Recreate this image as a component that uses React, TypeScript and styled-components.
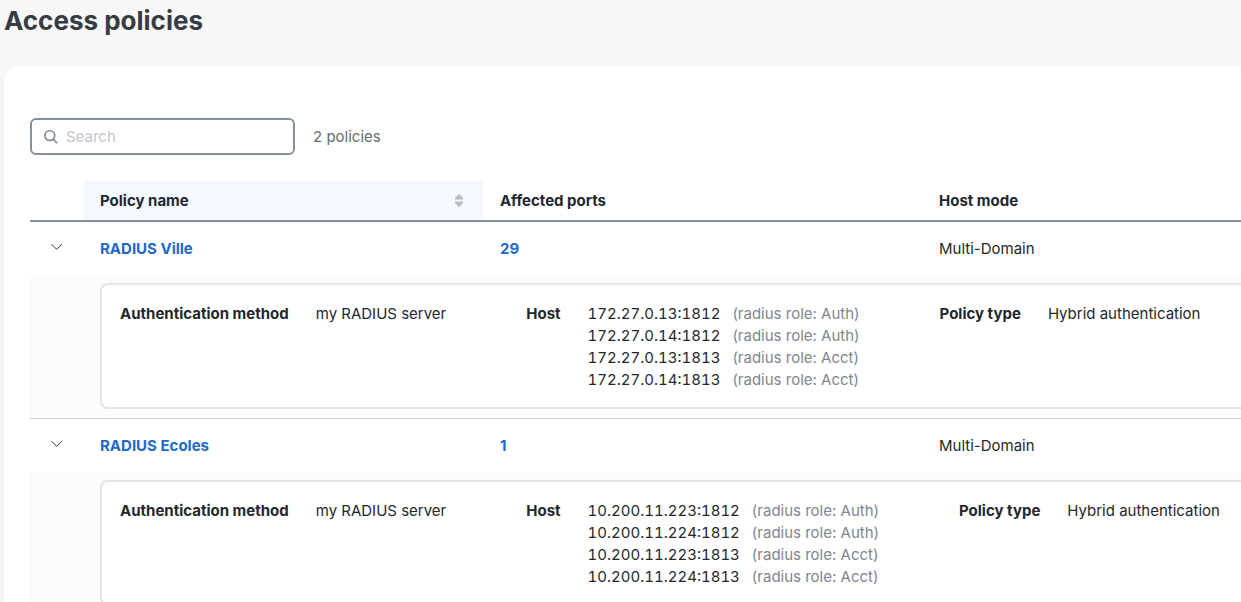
import React, { useState } from "react";
import styled, { createGlobalStyle } from "styled-components";

const GlobalStyle = createGlobalStyle`
  *, *::before, *::after { box-sizing: border-box; }
  body {
    margin: 0;
    background: #f7f7f7;
    color: #23282e;
    font-family: Inter, "Liberation Sans", sans-serif;
    font-size: 15px;
    line-height: 22px;
    overflow-x: hidden;
  }
  body::-webkit-scrollbar { display: none; }
`;

const Page = styled.main`
  padding: 4px 0 0 4px;
`;

const Title = styled.h1`
  margin: 0;
  color: #373c43;
  font-size: 26px;
  font-weight: 700;
  line-height: 34px;
`;

const Card = styled.section`
  margin-top: 28px;
  padding: 52px 0 24px 26px;
  background: #fff;
  border-top-left-radius: 16px;
  box-shadow: 0 6px 10px rgba(0, 0, 0, 0.06);
`;

const Toolbar = styled.div`
  display: flex;
  align-items: center;
  gap: 18px;
  margin-bottom: 26px;
`;

const SearchBox = styled.label`
  display: flex;
  align-items: center;
  gap: 8px;
  width: 265px;
  height: 37px;
  padding: 0 11px;
  border: 2px solid #889099;
  border-radius: 6px;
  color: #7e868f;
`;

const SearchInput = styled.input`
  flex: 1;
  min-width: 0;
  padding: 0;
  border: 0;
  outline: 0;
  background: transparent;
  color: #23282e;
  font: inherit;
  &::placeholder { color: #c1c6cb; opacity: 1; }
`;

const Count = styled.span`
  color: #656b73;
`;

const Table = styled.table`
  width: 100%;
  border-collapse: separate;
  border-spacing: 0;
  table-layout: fixed;
`;

const Column = styled.col<{ $width?: number }>`
  width: ${({ $width }) => ($width ? `${$width}px` : "auto")};
`;

const HeadCell = styled.th<{ $sorted?: boolean }>`
  height: 41px;
  padding: 0 17px;
  border-bottom: 2px solid #889099;
  background: ${({ $sorted }) => ($sorted ? "#f5f8ff" : "transparent")};
  font-weight: 700;
  text-align: left;
`;

const SortButton = styled.button`
  display: flex;
  align-items: center;
  justify-content: space-between;
  width: 100%;
  padding: 0 2px 0 0;
  border: 0;
  background: transparent;
  color: inherit;
  font: inherit;
  cursor: pointer;
`;

const Cell = styled.td`
  height: 53px;
  padding: 0 17px;
`;

const ToggleCell = styled(Cell)`
  padding: 0 0 6px;
  text-align: center;
`;

const Toggle = styled.button<{ $open: boolean }>`
  display: inline-flex;
  padding: 4px;
  border: 0;
  background: transparent;
  color: #30353b;
  cursor: pointer;
  svg { transform: ${({ $open }) => ($open ? "none" : "rotate(-90deg)")}; }
`;

const Link = styled.a`
  color: #1d69cc;
  font-weight: 700;
  text-decoration: none;
`;

const DetailCell = styled.td`
  padding: 8px 0 9px 70px;
  border-bottom: 1px solid #cdd1d6;
  background: #fbfbfb;
`;

const DetailPanel = styled.dl`
  display: flex;
  gap: 80px;
  margin: 0;
  padding: 18px 0 16px 18px;
  border: 2px solid #e1e4e8;
  border-right: 0;
  border-radius: 8px 0 0 8px;
  background: #fff;
  white-space: nowrap;
`;

const Field = styled.div`
  display: flex;
  gap: 27px;
`;

const Term = styled.dt`
  font-weight: 700;
`;

const Value = styled.dd`
  margin: 0;
`;

const HostLine = styled.div`
  display: flex;
  gap: 12px;
`;

const Address = styled.span`
  font-variant-numeric: tabular-nums;
`;

const Role = styled.span`
  color: #7e868f;
`;

const SearchIcon = () => (
  <svg width="15" height="15" viewBox="0 0 15 15" fill="none" stroke="currentColor" strokeWidth="1.6" strokeLinecap="round" aria-hidden="true">
    <circle cx="6.8" cy="6.6" r="4.9" />
    <path d="M10.5 10.5 13.6 13.6" />
  </svg>
);

const SortIcon = () => (
  <svg width="10" height="14" viewBox="0 0 10 14" fill="#babdc0" aria-hidden="true">
    <path d="M5 0 9 4V5.4H1V4Z" />
    <path d="M5 13 9 9V7.6H1V9Z" />
  </svg>
);

const ChevronIcon = () => (
  <svg width="12" height="8" viewBox="0 0 12 8" fill="none" stroke="currentColor" strokeWidth="1" aria-hidden="true">
    <path d="M.5 1.2 5.7 6.4l5.2-5.2" />
  </svg>
);

type Host = { address: string; role: string };
type Policy = { name: string; ports: number; mode: string; hosts: Host[] };

const makeHosts = (first: string, second: string): Host[] => [
  { address: `${first}:1812`, role: "Auth" },
  { address: `${second}:1812`, role: "Auth" },
  { address: `${first}:1813`, role: "Acct" },
  { address: `${second}:1813`, role: "Acct" },
];

const policies: Policy[] = [
  { name: "RADIUS Ville", ports: 29, mode: "Multi-Domain", hosts: makeHosts("172.27.0.13", "172.27.0.14") },
  { name: "RADIUS Ecoles", ports: 1, mode: "Multi-Domain", hosts: makeHosts("10.200.11.223", "10.200.11.224") },
];

const PolicyRows = ({ policy }: { policy: Policy }) => {
  const [open, setOpen] = useState(true);
  return (
    <tbody>
      <tr>
        <ToggleCell>
          <Toggle $open={open} aria-expanded={open} aria-label={`Details of ${policy.name}`} onClick={() => setOpen(!open)}>
            <ChevronIcon />
          </Toggle>
        </ToggleCell>
        <Cell><Link href="#policy">{policy.name}</Link></Cell>
        <Cell><Link href="#ports">{policy.ports}</Link></Cell>
        <Cell>{policy.mode}</Cell>
      </tr>
      {open && (
        <tr>
          <DetailCell colSpan={4}>
            <DetailPanel>
              <Field>
                <Term>Authentication method</Term>
                <Value>my RADIUS server</Value>
              </Field>
              <Field>
                <Term>Host</Term>
                <Value>
                  {policy.hosts.map((host) => (
                    <HostLine key={host.address}>
                      <Address>{host.address}</Address>
                      <Role>(radius role: {host.role})</Role>
                    </HostLine>
                  ))}
                </Value>
              </Field>
              <Field>
                <Term>Policy type</Term>
                <Value>Hybrid authentication</Value>
              </Field>
            </DetailPanel>
          </DetailCell>
        </tr>
      )}
    </tbody>
  );
};

export default function App() {
  const [query, setQuery] = useState("");
  const [ascending, setAscending] = useState(true);
  const found = policies.filter((p) => p.name.toLowerCase().includes(query.toLowerCase()));
  const shown = ascending ? found : [...found].reverse();

  return (
    <Page>
      <GlobalStyle />
      <Title>Access policies</Title>
      <Card>
        <Toolbar>
          <SearchBox>
            <SearchIcon />
            <SearchInput type="text" placeholder="Search" aria-label="Search" value={query} onChange={(e) => setQuery(e.target.value)} />
          </SearchBox>
          <Count>{shown.length} policies</Count>
        </Toolbar>
        <Table>
          <colgroup>
            <Column $width={53} />
            <Column $width={400} />
            <Column $width={439} />
            <Column />
          </colgroup>
          <thead>
            <tr>
              <HeadCell aria-label="Expand" />
              <HeadCell $sorted>
                <SortButton onClick={() => setAscending(!ascending)}>
                  Policy name
                  <SortIcon />
                </SortButton>
              </HeadCell>
              <HeadCell>Affected ports</HeadCell>
              <HeadCell>Host mode</HeadCell>
            </tr>
          </thead>
          {shown.map((policy) => <PolicyRows key={policy.name} policy={policy} />)}
        </Table>
      </Card>
    </Page>
  );
}
